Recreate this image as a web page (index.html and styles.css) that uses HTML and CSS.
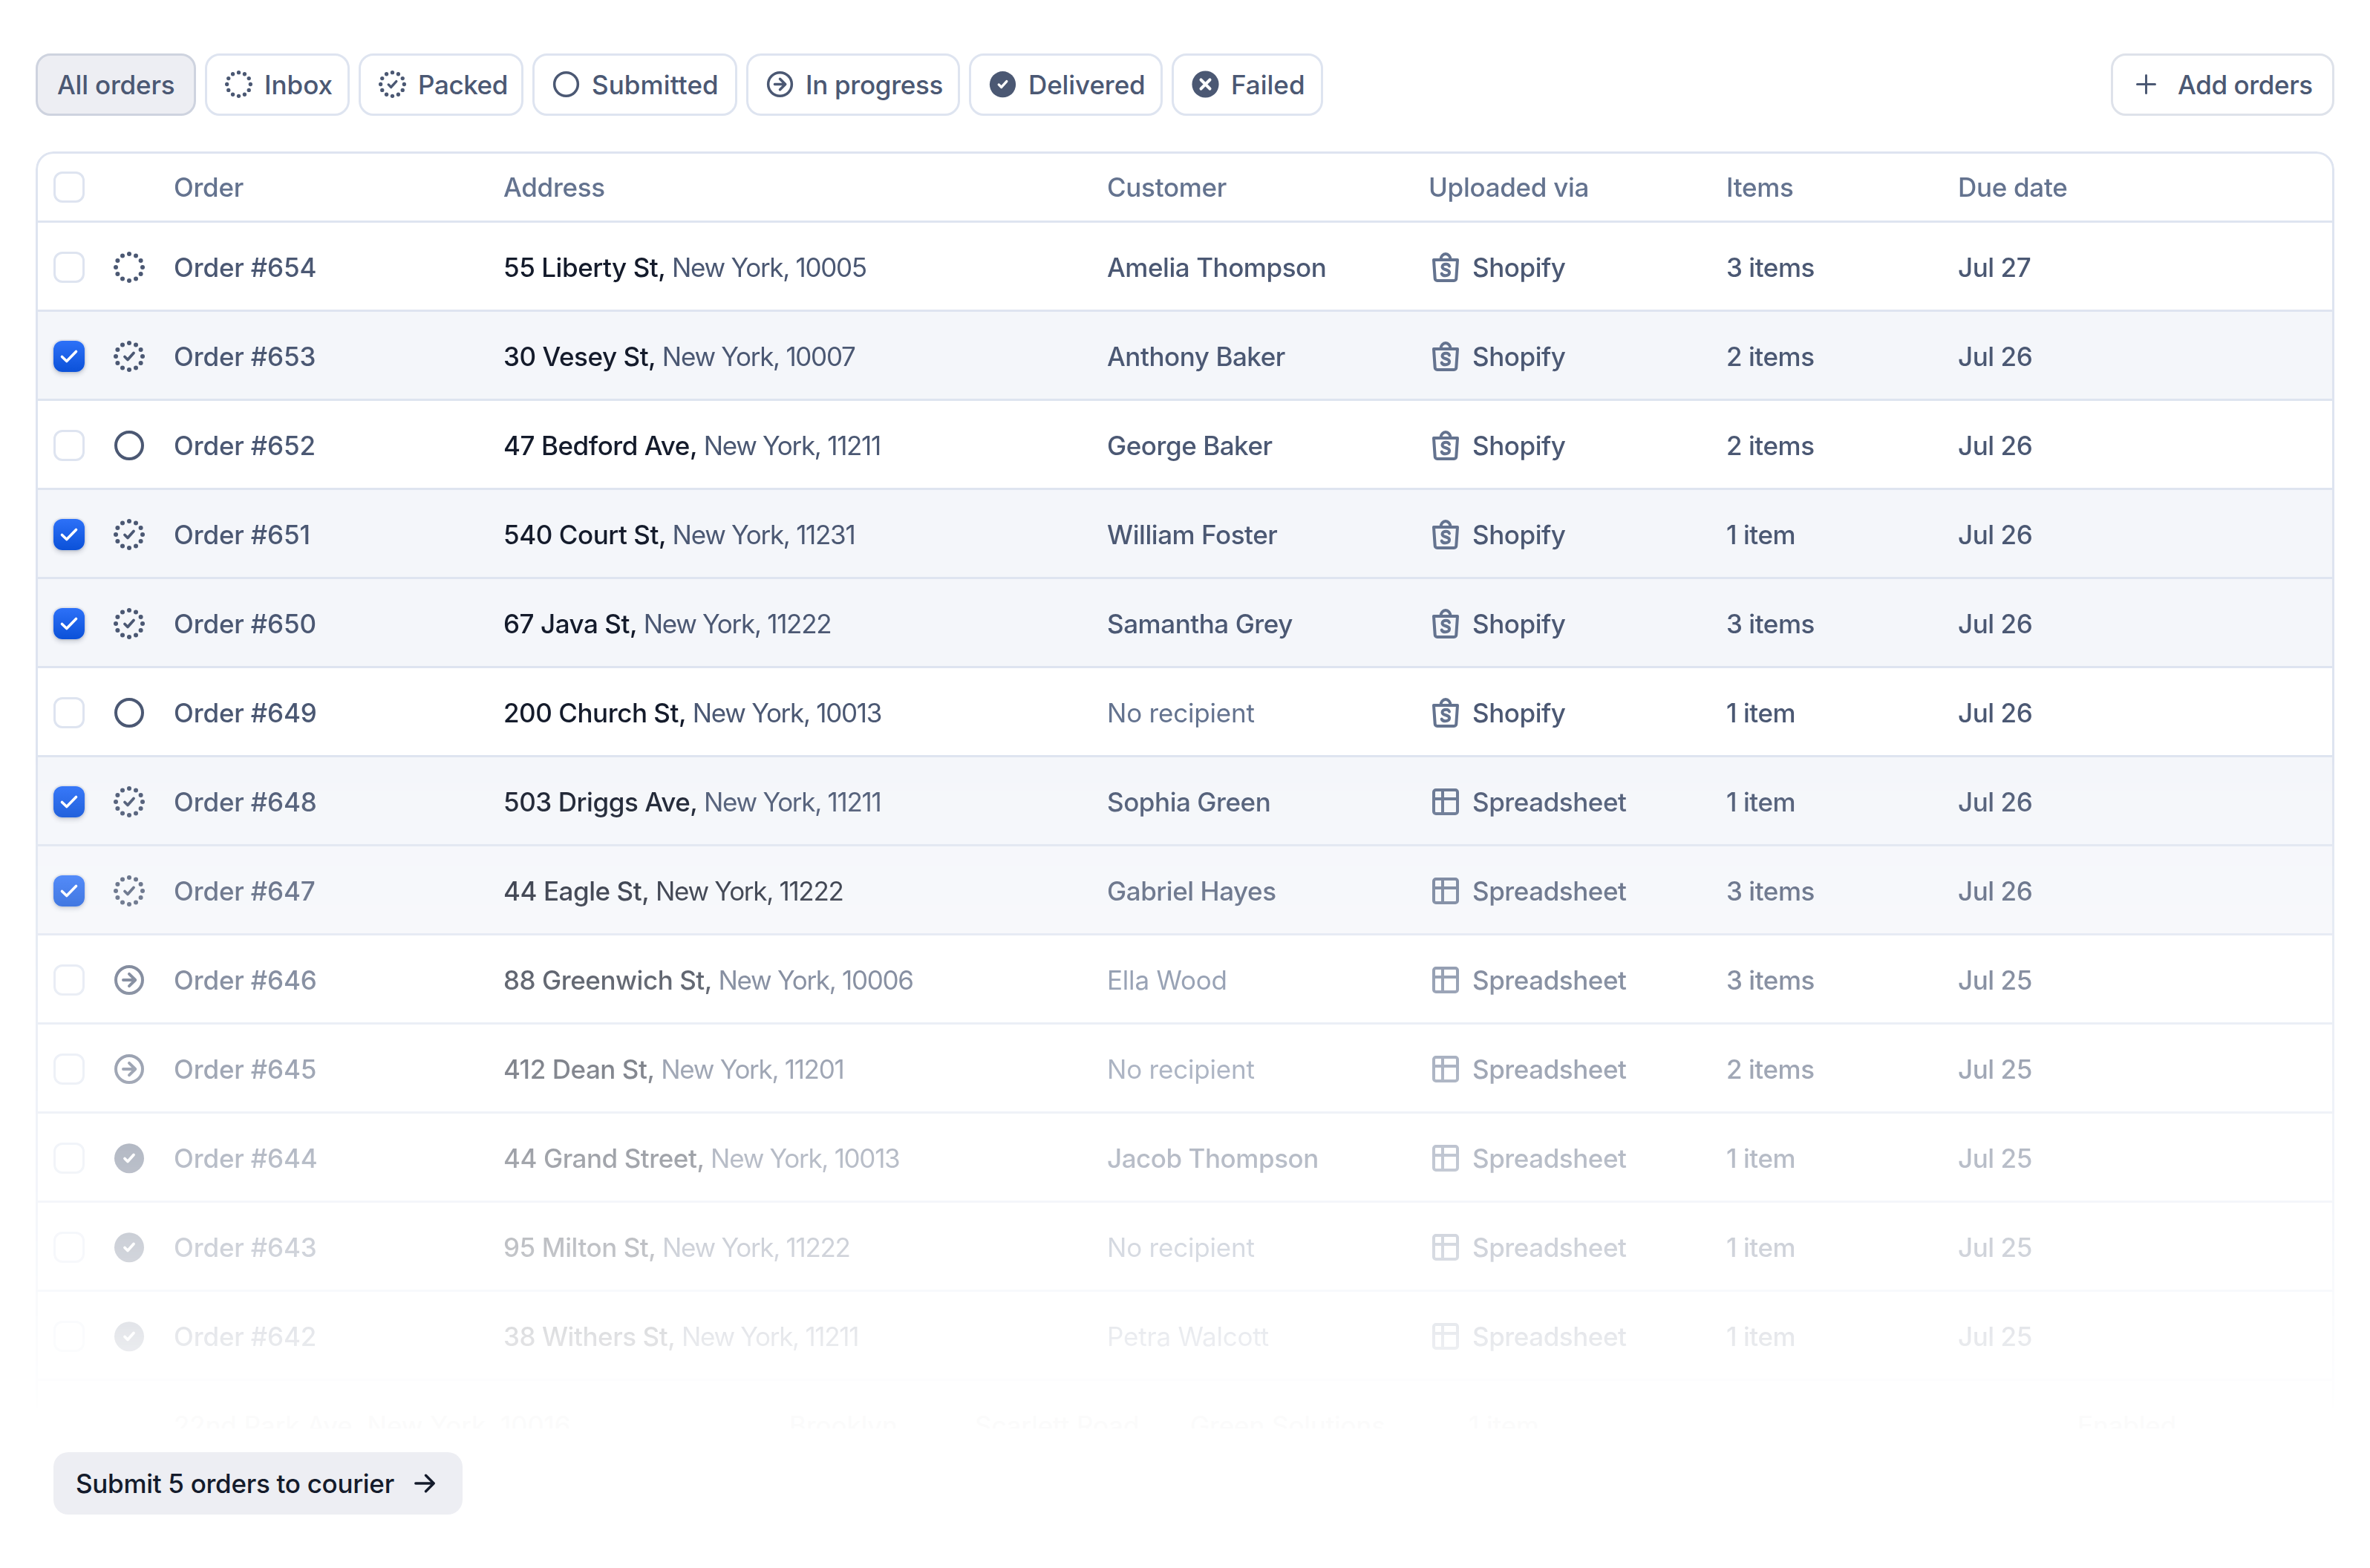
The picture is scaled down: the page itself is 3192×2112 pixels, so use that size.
FILE: index.html
```
<!DOCTYPE html>
<html lang="en">
<head>
  <meta charset="UTF-8">
  <meta name="viewport" content="width=device-width, initial-scale=1.0">
  <title>Orders</title>
  <link rel="stylesheet" href="styles.css">
</head>
<body>
  <!-- Icon sprite -->
  <svg class="sprite" aria-hidden="true">
    <symbol id="icon-inbox" viewBox="0 0 42 42">
      <g fill="currentColor">
        <circle cx="21" cy="3" r="3"/><circle cx="30" cy="5.4" r="3"/><circle cx="36.6" cy="12" r="3"/>
        <circle cx="39" cy="21" r="3"/><circle cx="36.6" cy="30" r="3"/><circle cx="30" cy="36.6" r="3"/>
        <circle cx="21" cy="39" r="3"/><circle cx="12" cy="36.6" r="3"/><circle cx="5.4" cy="30" r="3"/>
        <circle cx="3" cy="21" r="3"/><circle cx="5.4" cy="12" r="3"/><circle cx="12" cy="5.4" r="3"/>
      </g>
    </symbol>
    <symbol id="icon-packed" viewBox="0 0 42 42">
      <use href="#icon-inbox"/>
      <path d="M15 21.5l4 4 8-9" fill="none" stroke="currentColor" stroke-width="3.8" stroke-linecap="round" stroke-linejoin="round"/>
    </symbol>
    <symbol id="icon-submitted" viewBox="0 0 42 42">
      <circle cx="21" cy="21" r="18" fill="none" stroke="currentColor" stroke-width="4"/>
    </symbol>
    <symbol id="icon-progress" viewBox="0 0 42 42">
      <circle cx="21" cy="21" r="18" fill="none" stroke="currentColor" stroke-width="4"/>
      <path d="M13 21h16M21 12.8l8.2 8.2-8.2 8.2" fill="none" stroke="currentColor" stroke-width="4" stroke-linecap="round" stroke-linejoin="round"/>
    </symbol>
    <symbol id="icon-delivered" viewBox="0 0 42 42">
      <circle cx="21" cy="21.2" r="20" fill="currentColor"/>
      <path d="M15 21.5l4 4 8-9" fill="none" stroke="#fff" stroke-width="3.8" stroke-linecap="round" stroke-linejoin="round"/>
    </symbol>
    <symbol id="icon-failed" viewBox="0 0 42 42">
      <circle cx="21" cy="21" r="20.5" fill="currentColor"/>
      <path d="M14.2 14.2l13.6 13.6M27.8 14.2L14.2 27.8" fill="none" stroke="#fff" stroke-width="4.6" stroke-linecap="round"/>
    </symbol>
    <symbol id="icon-shopify" viewBox="0 0 36 40">
      <g fill="none" stroke="currentColor" stroke-width="4" stroke-linejoin="round" stroke-linecap="round">
        <path d="M2 10h32l-1.7 25a3 3 0 0 1-3 3H6.700a3 3 0 0 1-3-3z"/>
        <path d="M11.500 9.500a6.500 7.500 0 0 1 13 0"/>
        <path d="M23 18.500c-.6-2-2.300-2.800-4.600-2.800-2.700 0-4.900 1.300-4.900 3.700 0 5 9.600 2.600 9.600 7.700 0 2.700-2.300 4.200-5.300 4.200-2.500 0-4.300-.8-5.100-2.700" />
      </g>
    </symbol>
    <symbol id="icon-spreadsheet" viewBox="0 0 36 36">
      <path d="M5 2h26a3 3 0 0 1 3 3v26a3 3 0 0 1-3 3H5a3 3 0 0 1-3-3V5a3 3 0 0 1 3-3zM2 14h32M14 2v32" fill="none" stroke="currentColor" stroke-width="4"/>
    </symbol>
    <symbol id="icon-check" viewBox="0 0 42 42">
      <path d="M11.500 21.500l6.300 6L30.500 14.500" fill="none" stroke="#fff" stroke-width="3.600" stroke-linecap="round" stroke-linejoin="round"/>
    </symbol>
    <symbol id="icon-plus" viewBox="0 0 27 27">
      <path d="M13.500 1.500v24M1.500 13.500h24" fill="none" stroke="currentColor" stroke-width="3" stroke-linecap="round"/>
    </symbol>
    <symbol id="icon-arrow" viewBox="0 0 28 26">
      <path d="M1.800 13h24.400M15.500 2.200L26.200 13 15.500 23.800" fill="none" stroke="currentColor" stroke-width="3.400" stroke-linecap="round" stroke-linejoin="round"/>
    </symbol>
  </svg>

  <header class="toolbar">
    <nav class="filters">
      <button class="btn btn-all active">All orders</button>
      <button class="btn btn-inbox"><svg class="icon"><use href="#icon-inbox"/></svg>Inbox</button>
      <button class="btn btn-packed"><svg class="icon"><use href="#icon-packed"/></svg>Packed</button>
      <button class="btn btn-submitted"><svg class="icon"><use href="#icon-submitted"/></svg>Submitted</button>
      <button class="btn btn-progress"><svg class="icon"><use href="#icon-progress"/></svg>In progress</button>
      <button class="btn btn-delivered"><svg class="icon"><use href="#icon-delivered"/></svg>Delivered</button>
      <button class="btn btn-failed"><svg class="icon"><use href="#icon-failed"/></svg>Failed</button>
    </nav>
    <button class="btn btn-add"><svg class="icon-plus"><use href="#icon-plus"/></svg>Add orders</button>
  </header>

  <main class="orders">
    <div class="row row-head">
      <span class="checkbox"></span>
      <span></span>
      <span>Order</span>
      <span>Address</span>
      <span>Customer</span>
      <span>Uploaded via</span>
      <span>Items</span>
      <span>Due date</span>
    </div>
    <div id="rows"></div>
  </main>

  <!-- Barely visible start of the next row -->
  <div class="next-row">
    <span>22nd Park Ave, New York, 10016</span>
    <span>Brooklyn</span>
    <span>Scarlett Road</span>
    <span>Green Solutions</span>
    <span>1 item</span>
    <span>Enabled</span>
  </div>

  <footer class="actions">
    <button class="submit">Submit 5 orders to courier <svg class="icon-arrow"><use href="#icon-arrow"/></svg></button>
  </footer>

  <script src="orders.js"></script>
</body>
</html>
```

FILE: styles.css
```
* {
  box-sizing: border-box;
}
body {
  margin: 0;
  padding: 72px 48px 0;
  height: 2112px;
  overflow: hidden;
  background: #fff;
  color: #4b5873;
  font-family: Inter, "Liberation Sans", sans-serif;
  font-size: 35px;
  font-weight: 500;
  line-height: 48px;
}
.sprite {
  display: none;
}
button {
  font: inherit;
  color: inherit;
  cursor: pointer;
}

/* Toolbar */
.toolbar {
  display: flex;
  justify-content: space-between;
}
.filters {
  display: flex;
  gap: 12px;
}
.btn {
  display: flex;
  align-items: center;
  height: 84px;
  padding: 0 0 1px 24px;
  background: #fff;
  border: 3px solid #dee4f0;
  border-radius: 20px;
  white-space: nowrap;
}
.btn.active {
  padding-left: 26px;
  background: #edeef3;
  border-color: #ced3df;
  letter-spacing: -0.2px;
}
.icon {
  width: 37px;
  height: 37px;
  margin-right: 16px;
}
.btn-all { width: 216px; }
.btn-inbox { width: 195px; }
.btn-packed { width: 222px; letter-spacing: -0.4px; }
.btn-submitted { width: 276px; letter-spacing: 0.1px; }
.btn-progress { width: 288px; letter-spacing: -0.3px; }
.btn-delivered { width: 261px; letter-spacing: -0.1px; }
.btn-failed { width: 204px; }
.btn-add {
  width: 301px;
  padding-left: 31px;
  border-color: #dee2ea;
  letter-spacing: -0.4px;
}
.icon-plus {
  width: 27px;
  height: 27px;
  margin-right: 29px;
}

/* Table */
.orders {
  height: 1692px;
  margin-top: 48px;
  overflow: hidden;
  border: 3px solid #dee4f0;
  border-bottom: 0;
  border-radius: 24px 24px 0 0;
  letter-spacing: -0.45px;
  -webkit-mask-image: linear-gradient(#000 810px, transparent 1720px);
  mask-image: linear-gradient(#000 810px, transparent 1720px);
  -webkit-mask-size: 100% 1720px;
  mask-size: 100% 1720px;
}
.row {
  display: grid;
  grid-template-columns: 81px 81px 444px 813px 433px 401px 312px 1fr;
  align-items: center;
  height: 120px;
  padding: 3px 0 0 21px;
  border-bottom: 3px solid #dee4f0;
  white-space: nowrap;
}
.row > span:not(.checkbox) {
  padding-bottom: 1px;
}
.row-head {
  height: 93px;
  padding-top: 0;
  color: #64738f;
  letter-spacing: -0.3px;
}
.row.selected {
  background: #f4f6fa;
}
.checkbox {
  width: 42px;
  height: 42px;
  border: 3px solid #dee4f0;
  border-radius: 12px;
  background: #fff;
}
.selected .checkbox {
  border: 0;
  background: linear-gradient(#2d71f8, #0b51d8);
  box-shadow: 0 0 0 2px rgba(30, 50, 90, 0.06), 0 3px 6px rgba(20, 30, 60, 0.2);
}
.checkbox svg {
  display: block;
  width: 42px;
  height: 42px;
}
.status {
  width: 42px;
  height: 42px;
}
.number {
  letter-spacing: -0.15px;
}
.address {
  font-weight: 400;
  letter-spacing: -1.3px;
}
.address b {
  color: #141b2b;
  font-weight: 500;
  letter-spacing: -0.45px;
}
.address.dark {
  color: #141b2b;
}
.muted {
  color: #64738f;
  font-weight: 400;
  letter-spacing: -0.2px;
}
.source {
  display: flex;
  align-items: center;
  padding-left: 5px;
}
.source svg {
  width: 36px;
  height: 40px;
  margin-right: 18px;
  color: #64738f;
}

.next-row {
  display: grid;
  grid-template-columns: 829px 250px 290px 375px 820px 1fr;
  height: 28px;
  padding-left: 186px;
  overflow: hidden;
  color: #fbfbfb;
  font-weight: 400;
  white-space: nowrap;
}

/* Bottom action */
.actions {
  padding: 32px 24px 0;
}
.submit {
  display: flex;
  align-items: center;
  width: 551px;
  height: 84px;
  padding: 0 0 1px 30px;
  border: 0;
  border-radius: 20px;
  background: #edeef3;
  color: #141b2b;
  letter-spacing: -0.3px;
  white-space: nowrap;
}
.icon-arrow {
  width: 28px;
  height: 26px;
  margin-left: 27px;
}
```

FILE: orders.js
```
const orders = [
  [654, 'inbox', '55 Liberty St,', 'New York, 10005', 'Amelia Thompson', 'Shopify', '3 items', 'Jul 27'],
  [653, 'packed', '30 Vesey St,', 'New York, 10007', 'Anthony Baker', 'Shopify', '2 items', 'Jul 26'],
  [652, 'submitted', '47 Bedford Ave,', 'New York, 11211', 'George Baker', 'Shopify', '2 items', 'Jul 26'],
  [651, 'packed', '540 Court St,', 'New York, 11231', 'William Foster', 'Shopify', '1 item', 'Jul 26'],
  [650, 'packed', '67 Java St,', 'New York, 11222', 'Samantha Grey', 'Shopify', '3 items', 'Jul 26'],
  [649, 'submitted', '200 Church St,', 'New York, 10013', '', 'Shopify', '1 item', 'Jul 26'],
  [648, 'packed', '503 Driggs Ave,', 'New York, 11211', 'Sophia Green', 'Spreadsheet', '1 item', 'Jul 26'],
  [647, 'packed', '44 Eagle St,', 'New York, 11222', 'Gabriel Hayes', 'Spreadsheet', '3 items', 'Jul 26'],
  [646, 'progress', '88 Greenwich St,', 'New York, 10006', 'Ella Wood', 'Spreadsheet', '3 items', 'Jul 25'],
  [645, 'progress', '412 Dean St,', 'New York, 11201', '', 'Spreadsheet', '2 items', 'Jul 25'],
  [644, 'delivered', '44 Grand Street,', 'New York, 10013', 'Jacob Thompson', 'Spreadsheet', '1 item', 'Jul 25'],
  [643, 'delivered', '95 Milton St,', 'New York, 11222', '', 'Spreadsheet', '1 item', 'Jul 25'],
  [642, 'delivered', '38 Withers St,', 'New York, 11211', 'Petra Walcott', 'Spreadsheet', '1 item', 'Jul 25']
];
const mutedCustomers = ['', 'Ella Wood', 'Petra Walcott'];

document.getElementById('rows').innerHTML = orders.map(([id, status, street, city, customer, source, items, due]) => {
  const selected = status === 'packed';
  return `
    <div class="row${selected ? ' selected' : ''}">
      <span class="checkbox">${selected ? '<svg><use href="#icon-check"/></svg>' : ''}</span>
      <svg class="status"><use href="#icon-${status}"/></svg>
      <span class="number">Order #${id}</span>
      <span class="address${id === 647 ? ' dark' : ''}"><b>${street}</b> ${city}</span>
      <span${mutedCustomers.includes(customer) ? ' class="muted"' : ''}>${customer || 'No recipient'}</span>
      <span class="source"><svg><use href="#icon-${source.toLowerCase()}"/></svg>${source}</span>
      <span>${items}</span>
      <span>${due}</span>
    </div>`;
}).join('');
```
